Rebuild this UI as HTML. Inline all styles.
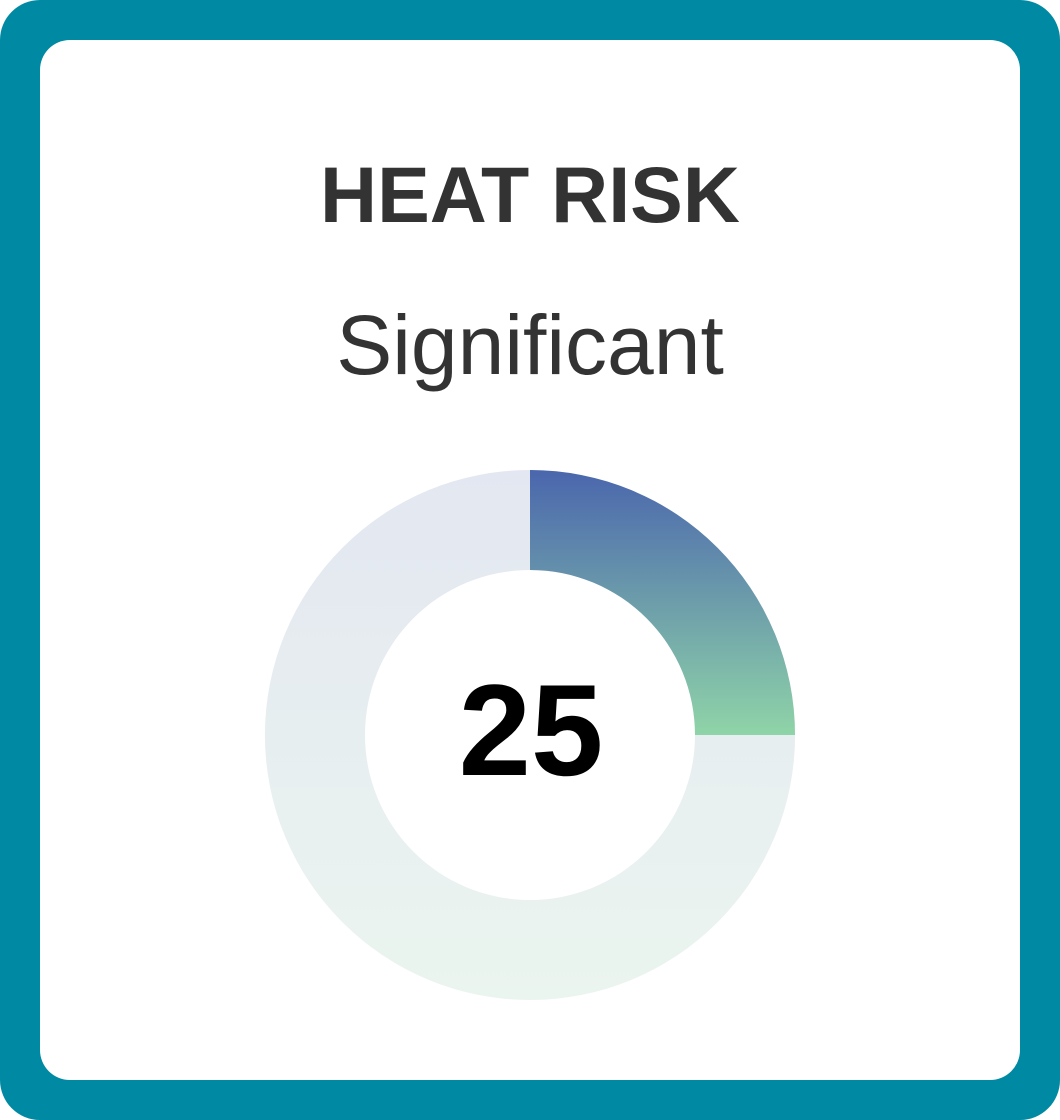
<!DOCTYPE html>
<html><head><meta charset="utf-8"><style>
html,body{margin:0;padding:0;}
body{width:1060px;height:1120px;background:#fff;position:relative;overflow:hidden;font-family:"Liberation Sans",sans-serif;}
.outer{position:absolute;left:0;top:0;width:1060px;height:1120px;background:#0089a2;border-radius:40px;}
.inner{position:absolute;left:40px;top:40px;width:980px;height:1040px;background:#fff;border-radius:30px;}
.t{position:absolute;left:0;width:1060px;text-align:center;color:#333;}
</style></head><body>
<div class="outer"></div><div class="inner"></div>
<div class="t" style="top:150px;font-size:79px;font-weight:bold;line-height:90px;">HEAT RISK</div>
<div class="t" style="top:297px;font-size:84px;line-height:96px;">Significant</div>
<svg style="position:absolute;left:0;top:0" width="1060" height="1120">
<defs>
<linearGradient id="bg" x1="0" y1="470" x2="0" y2="1000" gradientUnits="userSpaceOnUse"><stop offset="0" stop-color="#e3e7f1"/><stop offset="1" stop-color="#ebf5ef"/></linearGradient>
<linearGradient id="fg" x1="0" y1="470" x2="0" y2="735" gradientUnits="userSpaceOnUse"><stop offset="0" stop-color="#4a66ad"/><stop offset="1" stop-color="#8fd4a8"/></linearGradient>
</defs>
<path fill-rule="evenodd" fill="url(#bg)" d="M530 470a265 265 0 1 1 0 530a265 265 0 1 1 0-530zM530 570a165 165 0 1 0 0 330a165 165 0 1 0 0-330z"/>
<path fill="url(#fg)" d="M530 470A265 265 0 0 1 795 735H695A165 165 0 0 0 530 570Z"/>
<text x="531" y="775" text-anchor="middle" font-family="Liberation Sans,sans-serif" font-weight="bold" font-size="130" fill="#000">25</text>
</svg>
</body></html>
